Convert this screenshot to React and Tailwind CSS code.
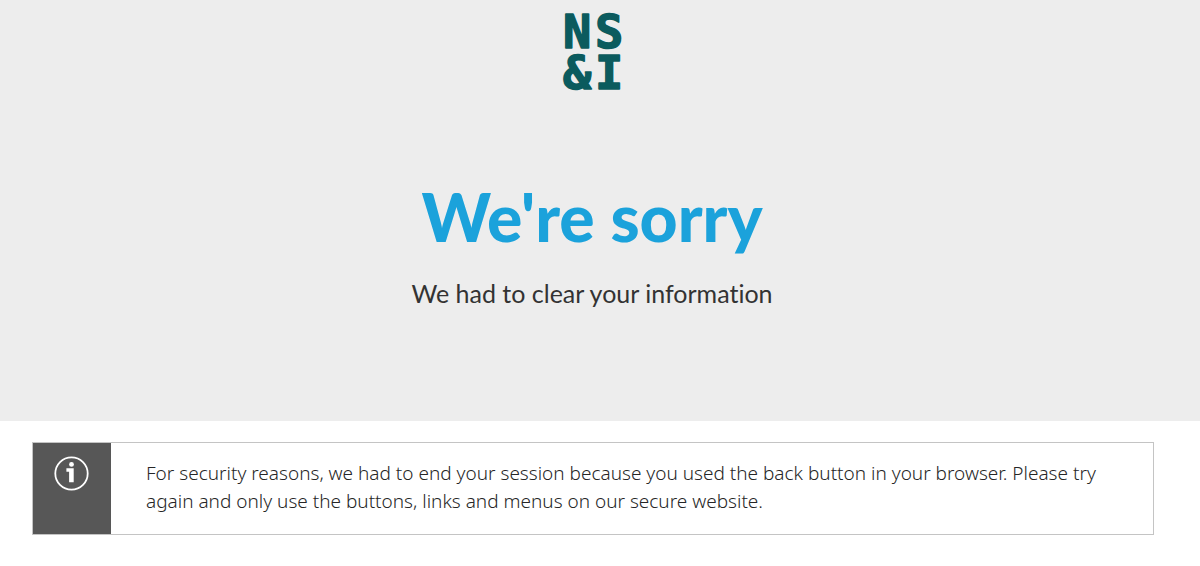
import React from 'react';

const Logo = () => {
    return (
        <svg
            className="block h-20 w-16 overflow-visible fill-[#0b5b5e] stroke-[#0b5b5e] font-['DejaVu_Sans_Mono',monospace] text-[47px] font-bold"
            viewBox="0 0 64 80"
            strokeWidth="1.5"
            strokeLinejoin="round"
            role="img"
            aria-label="NS&I"
        >
            <text x="3" y="36">N</text>
            <text x="35" y="36">S</text>
            <text x="3" y="77">&amp;</text>
            <text x="35" y="77">I</text>
        </svg>
    );
};

const InfoIcon = () => {
    return (
        <svg className="h-9 w-9" viewBox="0 0 36 36" fill="none" aria-hidden="true">
            <circle cx="17.5" cy="18.5" r="16.2" stroke="white" strokeWidth="1.8" />
            <circle cx="17.5" cy="9.4" r="2.4" fill="white" />
            <path d="M12.4 13.3h7.3v13.9h-4.6V16.8h-2.7z" fill="white" />
        </svg>
    );
};

const PageHeader = ({ title, subtitle }) => {
    return (
        <header className="flex flex-col items-center bg-[#ededed] pt-3 pr-4 pb-28 text-center">
            <Logo />
            <h1 className="mt-[85px] font-['Lato',sans-serif] text-[66px] leading-20 font-black text-[#1ba2db]">
                {title}
            </h1>
            <p className="mt-5 font-['Lato',sans-serif] text-[25px] leading-8 text-[#333333] [font-variant-ligatures:none]">
                {subtitle}
            </p>
        </header>
    );
};

const Notice = ({ children }) => {
    return (
        <div className="flex border border-[#c4c4c4]" role="status">
            <div className="flex w-[78px] shrink-0 justify-center bg-[#575757] pt-3">
                <InfoIcon />
            </div>
            <p className="pt-4 pr-9 pb-[19px] pl-[35px] font-['Noto_Sans',sans-serif] text-[19px] leading-7 font-light text-[#262626]">
                {children}
            </p>
        </div>
    );
};

const App = () => {
    return (
        <div className="min-h-screen bg-white">
            <PageHeader title="We're sorry" subtitle="We had to clear your information" />
            <main className="pt-[21px] pr-[46px] pl-8">
                <Notice>
                    For security reasons, we had to end your session because you used the back
                    button in your browser. Please try again and only use the buttons, links and
                    menus on our secure website.
                </Notice>
            </main>
        </div>
    );
};

export default App;
